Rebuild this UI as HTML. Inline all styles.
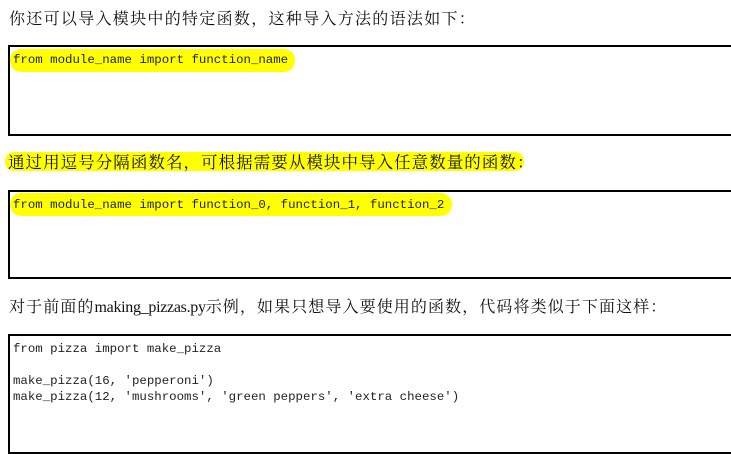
<!DOCTYPE html>
<html><head><meta charset="utf-8"><style>
body{margin:0;width:731px;height:417px;background:#fff;position:relative;overflow:hidden}
.t{position:absolute;left:9px;font-family:"Noto Serif CJK SC","Liberation Serif",serif;font-size:16px;color:#111;white-space:nowrap;line-height:20px}
.l{font-family:"Liberation Serif",serif;letter-spacing:-0.3px}
.box{position:absolute;left:8px;width:740px;border:2.5px solid #000;box-sizing:border-box}
.c{position:absolute;left:13px;font-family:"Liberation Mono",monospace;font-size:12.4px;color:#222;white-space:pre;line-height:16px}
.hl{position:absolute;background:#ffff00;border-radius:11px}
</style></head><body>
<div class="t" style="top:8px;letter-spacing:1.3px">你还可以导入模块中的特定函数，这种导入方法的语法如下：</div>
<div class="box" style="top:45px;height:91px"></div>
<div class="hl" style="left:10px;top:49px;width:285px;height:23px"></div>
<div class="c" style="top:52px">from module_name import function_name</div>

<div class="hl" style="left:5px;top:152px;width:519px;height:19px;border-radius:9px"></div>
<div class="t" style="top:151px;left:8px;font-size:16.5px;letter-spacing:1.05px">通过用逗号分隔函数名，可根据需要从模块中导入任意数量的函数：</div>
<div class="box" style="top:190px;height:89px"></div>
<div class="hl" style="left:10px;top:193px;width:442px;height:23px"></div>
<div class="c" style="top:197px">from module_name import function_0, function_1, function_2</div>

<div class="t" style="top:296px;letter-spacing:1.1px">对于前面的<span class="l">making_pizzas.py</span>示例，如果只想导入要使用的函数，代码将类似于下面这样：</div>
<div class="box" style="top:334px;height:120px"></div>
<div class="c" style="top:341px">from pizza import make_pizza

make_pizza(16, 'pepperoni')
make_pizza(12, 'mushrooms', 'green peppers', 'extra cheese')</div>
</body></html>
